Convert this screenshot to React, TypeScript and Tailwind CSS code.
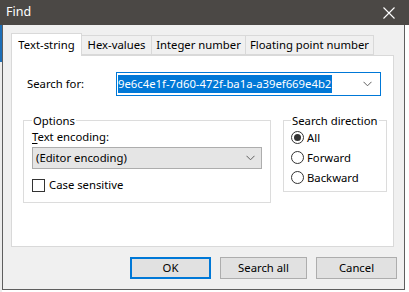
import React from "react";

const Chevron = () => (
  <svg width="9" height="6" viewBox="0 0 9 6" className="shrink-0">
    <path d="M0.5 0.8 L4.5 4.8 L8.5 0.8" fill="none" stroke="#606060" strokeWidth="1" />
  </svg>
);

const Radio = ({ checked, label }: { checked?: boolean; label: string }) => (
  <div className="flex items-center h-[20px]">
    <div className="w-[13px] h-[13px] rounded-full border border-[#333] bg-white flex items-center justify-center">
      {checked && <div className="w-[7px] h-[7px] rounded-full bg-[#333]" />}
    </div>
    <span className="ml-[3px]">{label}</span>
  </div>
);

export default function App() {
  const font = { fontFamily: '"Noto Sans", "Segoe UI", sans-serif' };
  return (
    <div className="w-[409px] h-[292px] bg-white flex flex-col text-[11.3px] text-black leading-none" style={font}>
      {/* title bar */}
      <div className="h-[25px] bg-[#4b4845] flex items-center justify-between pl-[6px] pr-[14px] shrink-0">
        <span className="text-white text-[12.5px]">Find</span>
        <svg width="12" height="12" viewBox="0 0 12 12">
          <path d="M0.5 0.5 L11.5 11.5 M11.5 0.5 L0.5 11.5" stroke="#fff" strokeWidth="1.1" />
        </svg>
      </div>
      <div className="flex flex-1 h-[267px]">
        {/* left strip */}
        <div className="w-[2px] flex flex-col bg-[#ececec]">
          <div className="h-[37px] bg-[#1d6fb8]" />
        </div>
        {/* window */}
        <div className="w-[403px] h-[265px] bg-[#f0f0f0] border-l border-r border-b border-[#5e5e5e] flex flex-col pt-[8px] pl-[8px]">
          {/* tabs */}
          <div className="flex items-end h-[22px] relative z-10">
            <div className="w-[71px] h-[23px] -mb-px bg-white border border-b-0 border-[#d9d9d9] flex items-center justify-center">Text-string</div>
            <div className="w-[70px] h-[20px] bg-[#f0f0f0] border border-l-0 border-[#d9d9d9] flex items-center justify-center">Hex-values</div>
            <div className="w-[94px] h-[20px] bg-[#f0f0f0] border border-l-0 border-[#d9d9d9] flex items-center justify-center">Integer number</div>
            <div className="w-[128px] h-[20px] bg-[#f0f0f0] border border-l-0 border-[#d9d9d9] flex items-center justify-center">Floating point number</div>
          </div>
          {/* panel */}
          <div className="w-[383px] h-[192px] bg-white border border-[#d9d9d9] flex flex-col">
            <div className="flex items-center mt-[16px] ml-[15px]">
              <span className="w-[89px]">Search for:</span>
              <div className="w-[265px] h-[24px] border border-[#0078d7] flex items-center pl-[1px] pr-[8px]">
                <span className="bg-[#0078d7] text-white h-[18px] flex items-center pr-[1px]">9e6c4e1f-7d60-472f-ba1a-a39ef669e4b2</span>
                <div className="flex-1" />
                <Chevron />
              </div>
            </div>
            <div className="flex mt-[19px] ml-[11px] gap-[12px] items-start">
              <fieldset className="w-[248px] h-[88px] border border-[#dcdcdc] px-[8px]">
                <legend className="px-[1px] whitespace-nowrap">Options</legend>
                <div className="mt-[5px]"><span className="underline underline-offset-2">T</span>ext encoding:</div>
                <div className="mt-[4px] w-[230px] h-[22px] bg-[#e5e5e5] border border-[#adadad] flex items-center pl-[3px] pr-[6px] justify-between">
                  <span>(Editor encoding)</span>
                  <Chevron />
                </div>
                <div className="flex items-center mt-[10px]">
                  <div className="w-[13px] h-[13px] border border-[#333] bg-white" />
                  <span className="ml-[4px]">Case sensitive</span>
                </div>
              </fieldset>
              <fieldset className="w-[97px] h-[77px] border border-[#dcdcdc] px-[7px]">
                <legend className="px-[1px] whitespace-nowrap">Search direction</legend>
                <div className="mt-[1px] flex flex-col">
                  <Radio checked label="All" />
                  <Radio label="Forward" />
                  <Radio label="Backward" />
                </div>
              </fieldset>
            </div>
          </div>
          {/* buttons */}
          <div className="flex justify-end gap-[9px] mt-[10px] pr-[7px]">
            <div className="w-[81px] h-[22px] bg-[#e1e1e1] border-2 border-[#0078d7] flex items-center justify-center">OK</div>
            <div className="w-[87px] h-[22px] bg-[#e1e1e1] border border-[#adadad] flex items-center justify-center">Search all</div>
            <div className="w-[81px] h-[22px] bg-[#e1e1e1] border border-[#adadad] flex items-center justify-center">Cancel</div>
          </div>
        </div>
        <div className="flex-1 bg-white" />
      </div>
    </div>
  );
}
